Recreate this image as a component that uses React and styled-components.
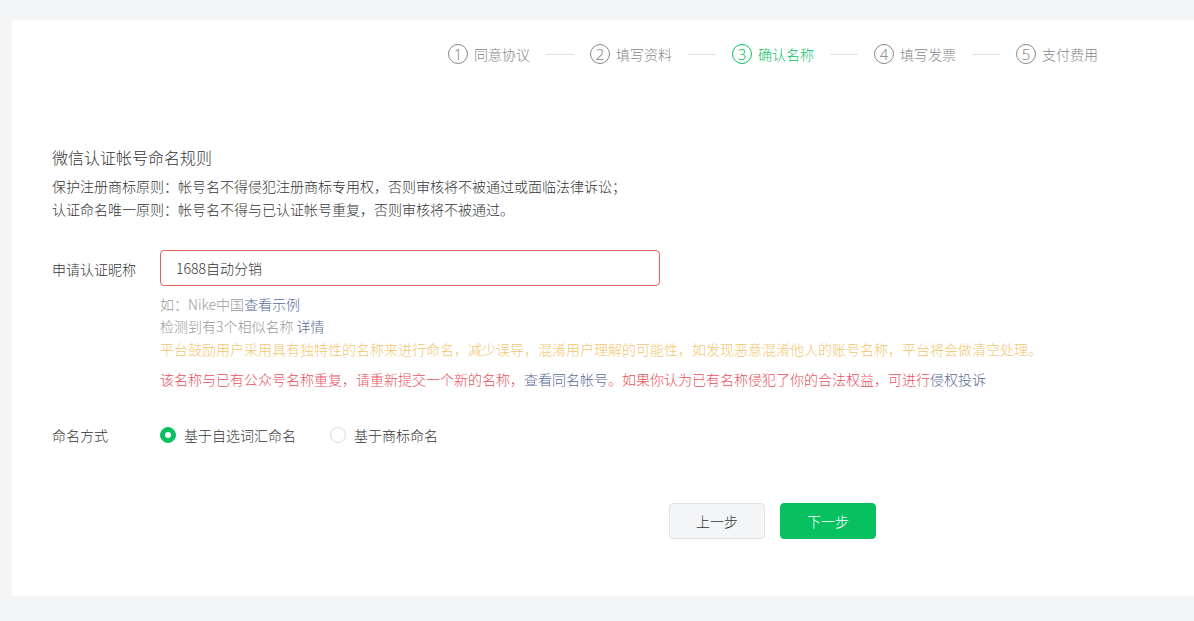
import React from "react";
import styled, { createGlobalStyle } from "styled-components";

const Global = createGlobalStyle`
  html, body { margin: 0; padding: 0; background: #f4f5f7; }
  body { font-family: "Noto Sans CJK SC", "Noto Sans", sans-serif; color: #353535; font-size: 14px; font-weight: 300; }
  * { box-sizing: border-box; }
`;

const Page = styled.div`
  padding: 20px 0 25px 12px;
  min-height: 621px;
`;

const Card = styled.div`
  background: #fff;
  border-radius: 4px 0 0 0;
  height: 576px;
  padding: 24px 0 0 40px;
`;

const Steps = styled.div`
  display: flex;
  justify-content: flex-end;
  align-items: center;
  padding-right: 96px;
  height: 20px;
`;

const Step = styled.div`
  display: flex;
  align-items: center;
  gap: 6px;
  color: ${(p) => (p.$active ? "#07c160" : "#888")};
  font-size: 14px;
  line-height: 20px;
`;

const Circle = styled.span`
  width: 20px;
  height: 20px;
  border-radius: 50%;
  border: 1px solid currentColor;
  display: flex;
  align-items: center;
  justify-content: center;
  font-size: 15px;
  line-height: 1;
  font-family: "Noto Sans", sans-serif;
`;

const Connector = styled.span`
  width: 28px;
  height: 1px;
  background: #e1e1e1;
  margin: 0 16px;
`;

const Title = styled.h2`
  margin: 81px 0 6px;
  font-size: 16px;
  font-weight: 300;
  line-height: 24px;
  color: #353535;
`;

const Rules = styled.div`
  font-size: 14px;
  line-height: 23px;
  color: #353535;
`;

const FormRow = styled.div`
  display: flex;
  align-items: ${(p) => p.$align || "flex-start"};
  margin-top: ${(p) => p.$mt || 0}px;
`;

const Label = styled.div`
  width: 108px;
  flex-shrink: 0;
  font-size: 14px;
  line-height: ${(p) => p.$lh || 36}px;
  color: #353535;
  padding-top: ${(p) => p.$pt || 0}px;
`;

const Field = styled.div`
  display: flex;
  flex-direction: column;
`;

const Input = styled.input`
  width: 500px;
  height: 36px;
  border: 1px solid #e15f61;
  border-radius: 4px;
  padding: 0 15px;
  font-family: "Noto Sans CJK SC", "Noto Sans", sans-serif;
  font-size: 14px;
  font-weight: 300;
  color: #353535;
  outline: none;
`;

const Hints = styled.div`
  margin-top: 7px;
  font-size: 14px;
  line-height: 22.5px;
  color: #9a9a9a;
`;

const Line = styled.div`
  color: ${(p) => p.$color || "#9a9a9a"};
  margin-top: ${(p) => p.$mt || 0}px;
  white-space: nowrap;
`;

const Link = styled.a`
  color: #576b95;
  text-decoration: none;
  cursor: pointer;
`;

const Radios = styled.div`
  display: flex;
  align-items: center;
  gap: 34px;
`;

const RadioItem = styled.label`
  display: flex;
  align-items: center;
  gap: 8px;
  font-size: 14px;
  line-height: 22px;
  color: #353535;
  cursor: pointer;
`;

const RadioDot = styled.span`
  width: 16px;
  height: 16px;
  border-radius: 50%;
  background: ${(p) => (p.$checked ? "#07c160" : "#fff")};
  border: 1px solid ${(p) => (p.$checked ? "#07c160" : "#dcdcdc")};
  display: flex;
  align-items: center;
  justify-content: center;
  &::after {
    content: "";
    width: 6px;
    height: 6px;
    border-radius: 50%;
    background: #fff;
    display: ${(p) => (p.$checked ? "block" : "none")};
  }
`;

const Actions = styled.div`
  display: flex;
  gap: 15px;
  margin-top: 57px;
  padding-left: 617px;
`;

const Button = styled.button`
  width: 96px;
  height: 36px;
  border-radius: 4px;
  font-family: "Noto Sans CJK SC", "Noto Sans", sans-serif;
  font-size: 14px;
  font-weight: 300;
  cursor: pointer;
  border: 1px solid ${(p) => (p.$primary ? "#07c160" : "#e2e2e2")};
  background: ${(p) => (p.$primary ? "#07c160" : "#f4f5f7")};
  color: ${(p) => (p.$primary ? "#fff" : "#353535")};
`;

const steps = ["同意协议", "填写资料", "确认名称", "填写发票", "支付费用"];

export default function App() {
  return (
    <>
      <Global />
      <Page>
        <Card>
          <Steps>
            {steps.map((s, i) => (
              <React.Fragment key={s}>
                {i > 0 && <Connector />}
                <Step $active={i === 2}>
                  <Circle>{i + 1}</Circle>
                  <span>{s}</span>
                </Step>
              </React.Fragment>
            ))}
          </Steps>

          <Title>微信认证帐号命名规则</Title>
          <Rules>
            <div>保护注册商标原则：帐号名不得侵犯注册商标专用权，否则审核将不被通过或面临法律诉讼；</div>
            <div>认证命名唯一原则：帐号名不得与已认证帐号重复，否则审核将不被通过。</div>
          </Rules>

          <FormRow $mt={28.5}>
            <Label $pt={1}>申请认证昵称</Label>
            <Field>
              <Input defaultValue="1688自动分销" />
              <Hints>
                <Line>
                  如：Nike中国<Link>查看示例</Link>
                </Line>
                <Line>
                  检测到有3个相似名称 <Link>详情</Link>
                </Line>
                <Line $color="#f3c66e">
                  平台鼓励用户采用具有独特性的名称来进行命名，减少误导，混淆用户理解的可能性，如发现恶意混淆他人的账号名称，平台将会做清空处理。
                </Line>
                <Line $color="#e8505b" $mt={8}>
                  该名称与已有公众号名称重复，请重新提交一个新的名称，<Link>查看同名帐号</Link>。如果你认为已有名称侵犯了你的合法权益，可进行<Link>侵权投诉</Link>
                </Line>
              </Hints>
            </Field>
          </FormRow>

          <FormRow $mt={33.5} $align="center">
            <Label $lh={22}>命名方式</Label>
            <Radios>
              <RadioItem>
                <RadioDot $checked />
                基于自选词汇命名
              </RadioItem>
              <RadioItem>
                <RadioDot />
                基于商标命名
              </RadioItem>
            </Radios>
          </FormRow>

          <Actions>
            <Button>上一步</Button>
            <Button $primary>下一步</Button>
          </Actions>
        </Card>
      </Page>
    </>
  );
}
